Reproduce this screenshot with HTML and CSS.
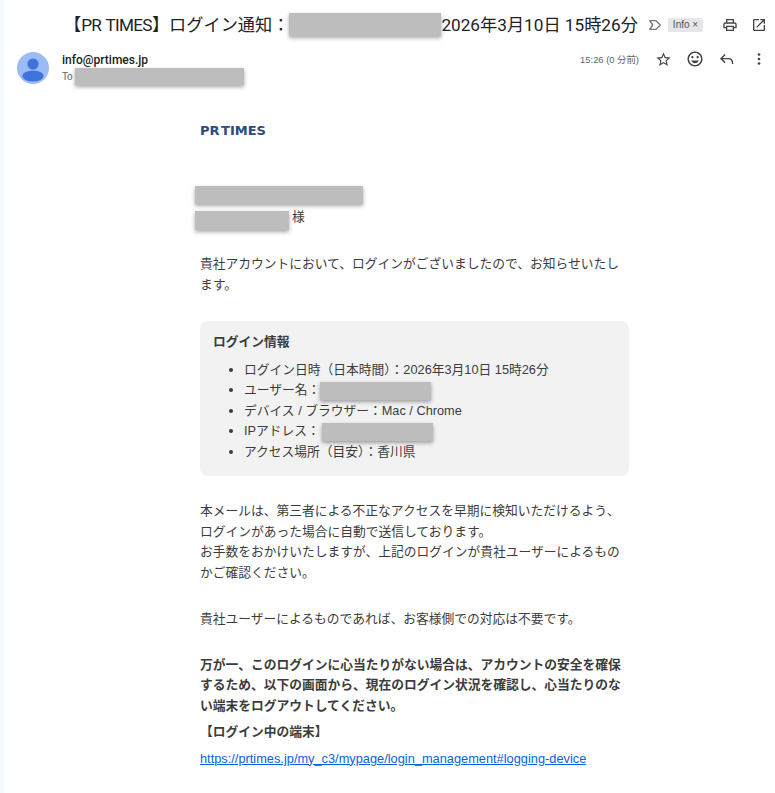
FILE: index.html
```html
<!DOCTYPE html>
<html lang="ja">

<head>
    <meta charset="UTF-8">
    <title>【PR TIMES】ログイン通知</title>
    <link rel="stylesheet" href="styles.css">
</head>

<body>
    <div class="mail">
        <div class="subject-row">
            <h1 class="subject">【<span class="subject-brand">PR TIMES</span>】ログイン通知：<span class="redact redact-subject"></span>2026年3月10日 15時26分</h1>
            <svg class="label-arrow" viewBox="0 0 24 24" width="14" height="14">
                <path d="M3 4.500h10.500l7.500 7.500-7.500 7.500H3l5-7.500z" fill="none" stroke="#777" stroke-width="2.400" stroke-linejoin="round"/>
            </svg>
            <span class="tag">Info <span class="tag-x">×</span></span>
            <div class="top-icons">
                <svg viewBox="0 0 24 24" width="16" height="16">
                    <path d="M19 8h-1V3H6v5H5c-1.660 0-3 1.340-3 3v6h4v4h12v-4h4v-6c0-1.660-1.340-3-3-3zM8 5h8v3H8V5zm8 14H8v-4h8v4zm2-4v-2H6v2H4v-4c0-.55.45-1 1-1h14c.55 0 1 .45 1 1v4h-2z" fill="#444"/>
                </svg>
                <svg viewBox="0 0 24 24" width="16" height="16">
                    <path d="M19 19H5V5h7V3H5c-1.100 0-2 .9-2 2v14c0 1.100.9 2 2 2h14c1.100 0 2-.9 2-2v-7h-2v7zM14 3v2h3.590l-9.830 9.830 1.410 1.410L19 6.410V10h2V3h-7z" fill="#444"/>
                </svg>
            </div>
        </div>

        <div class="sender-row">
            <svg class="avatar" viewBox="0 0 32 32" width="32" height="32">
                <circle cx="16" cy="16" r="16" fill="#9bbcf9"/>
                <circle cx="16" cy="12" r="5.600" fill="#3f73da"/>
                <ellipse cx="16" cy="24" rx="10.600" ry="5.600" fill="#3f73da"/>
            </svg>
            <div class="sender-info">
                <div class="sender-name">info@prtimes.jp</div>
                <div class="sender-to">To <span class="redact redact-to"></span></div>
            </div>
            <div class="sender-meta">
                <span class="sent-time">15:26 (0 分前)</span>
                <svg viewBox="0 0 24 24" width="17" height="17">
                    <path d="M22 9.240l-7.190-.62L12 2 9.190 8.630 2 9.240l5.460 4.730L5.820 21 12 17.270 18.180 21l-1.630-7.030L22 9.240zM12 15.400l-3.760 2.270 1-4.280-3.320-2.880 4.380-.38L12 6.100l1.710 4.040 4.380.38-3.320 2.880 1 4.280L12 15.400z" fill="#444"/>
                </svg>
                <svg viewBox="0 0 24 24" width="18" height="18">
                    <path d="M11.990 2C6.470 2 2 6.480 2 12s4.470 10 9.990 10C17.520 22 22 17.520 22 12S17.520 2 11.990 2zM12 20c-4.420 0-8-3.580-8-8s3.580-8 8-8 8 3.580 8 8-3.580 8-8 8zm3.500-9c.83 0 1.500-.67 1.500-1.500S16.330 8 15.500 8 14 8.670 14 9.500s.67 1.500 1.500 1.500zm-7 0c.83 0 1.500-.67 1.500-1.500S9.330 8 8.500 8 7 8.670 7 9.500 7.670 11 8.500 11zm3.500 6.500c2.330 0 4.310-1.460 5.110-3.500H6.890c.8 2.040 2.780 3.500 5.110 3.500z" fill="#444"/>
                </svg>
                <svg viewBox="0 0 24 24" width="18" height="18">
                    <path d="M9.500 6 4 11.500 9.500 17M4 11.500h10c3.500 0 5.500 2.500 5.500 7" fill="none" stroke="#444" stroke-width="1.900"/>
                </svg>
                <svg class="more-icon" viewBox="0 0 24 24" width="18" height="18">
                    <circle cx="12" cy="6" r="1.800" fill="#444"/>
                    <circle cx="12" cy="12" r="1.800" fill="#444"/>
                    <circle cx="12" cy="18" r="1.800" fill="#444"/>
                </svg>
            </div>
        </div>

        <div class="body-col">
            <div class="logo">PR TIMES</div>

            <div class="recipient">
                <span class="redact redact-company"></span>
                <div class="recipient-name"><span class="redact redact-name"></span><span class="honorific">様</span></div>
            </div>

            <p class="intro">貴社アカウントにおいて、ログインがございましたので、お知らせいたします。</p>

            <div class="info-box">
                <div class="info-title">ログイン情報</div>
                <ul class="info-list">
                    <li>ログイン日時（日本時間）：2026年3月10日 15時26分</li>
                    <li>ユーザー名：<span class="redact redact-value"></span></li>
                    <li>デバイス / ブラウザー：Mac / Chrome</li>
                    <li>IPアドレス：<span class="redact redact-value redact-ip"></span></li>
                    <li>アクセス場所（目安）：香川県</li>
                </ul>
            </div>

            <p class="notice">本メールは、第三者による不正なアクセスを早期に検知いただけるよう、ログインがあった場合に自動で送信しております。<br>お手数をおかけいたしますが、上記のログインが貴社ユーザーによるものかご確認ください。</p>

            <p class="notice notice-short">貴社ユーザーによるものであれば、お客様側での対応は不要です。</p>

            <p class="warning">万が一、このログインに心当たりがない場合は、アカウントの安全を確保するため、以下の画面から、現在のログイン状況を確認し、心当たりのない端末をログアウトしてください。</p>
            <p class="device-title">【ログイン中の端末】</p>
            <a class="device-link" href="#">https://prtimes.jp/my_c3/mypage/login_management#logging-device</a>
        </div>
    </div>
</body>

</html>
```

FILE: styles.css
```css
body {
    margin: 0;
    background-color: #fff;
    font-family: "Liberation Sans", "Noto Sans CJK JP", sans-serif;
    color: #3c3c3c;
}

.mail {
    height: 793px;
    overflow: hidden;
    border-left: 4px solid #f5f8fd;
    box-sizing: border-box;
}

.redact {
    display: inline-block;
    background-color: #bdbdbd;
    box-shadow: 0 2px 4px rgba(0, 0, 0, 0.35);
    vertical-align: middle;
}

.subject-row {
    display: flex;
    align-items: center;
    height: 50px;
    padding-left: 60px;
}

.subject {
    margin: 0;
    font-family: Roboto, "Noto Sans CJK JP", sans-serif;
    font-size: 17.2px;
    font-weight: 400;
    line-height: 24px;
    color: #222;
    white-space: nowrap;
}

.subject-brand {
    letter-spacing: -0.7px;
    word-spacing: 1px;
}

.redact-subject {
    width: 152px;
    height: 23px;
    vertical-align: -5px;
}

.label-arrow {
    margin-left: 10px;
}

.tag {
    margin-left: 6px;
    padding: 1px 5px;
    border-radius: 2px;
    background-color: #e6e6e6;
    font-size: 10px;
    line-height: 12px;
    color: #555;
    white-space: nowrap;
}

.top-icons {
    display: flex;
    gap: 13px;
    margin-left: 19px;
}

.sender-row {
    display: flex;
    align-items: flex-start;
    padding-left: 13px;
}

.avatar {
    margin-top: 2px;
}

.sender-info {
    margin-left: 13px;
    margin-top: 3px;
}

.sender-name {
    font-family: Roboto, sans-serif;
    font-size: 12px;
    font-weight: 500;
    line-height: 15px;
    color: #222;
}

.sender-to {
    display: flex;
    align-items: center;
    gap: 2px;
    font-size: 10px;
    line-height: 15px;
    color: #5f6368;
}

.redact-to {
    width: 169px;
    height: 17px;
}

.sender-meta {
    display: flex;
    align-items: center;
    gap: 14px;
    margin-left: auto;
    margin-right: 7px;
    font-size: 9.4px;
    color: #5f6368;
}

.sent-time {
    margin-right: 2px;
}

.body-col {
    width: 429px;
    margin-left: 196px;
    margin-top: 39px;
    font-size: 12.75px;
    line-height: 20.5px;
}

.logo {
    font-family: "DejaVu Sans", sans-serif;
    font-size: 13px;
    font-weight: 700;
    line-height: 14px;
    word-spacing: -3px;
    color: #2b4a7d;
}

.recipient {
    margin-top: 48px;
    margin-left: -5px;
}

.redact-company {
    display: block;
    width: 168px;
    height: 18px;
}

.recipient-name {
    display: flex;
    align-items: flex-start;
    gap: 3px;
    margin-top: 7px;
}

.redact-name {
    width: 94px;
    height: 19px;
}

.honorific {
    margin-top: -4px;
}

.intro {
    margin: 24px 0 0;
}

.info-box {
    margin-top: 26px;
    padding: 11px 13px 14px;
    border-radius: 8px;
    background-color: #f2f2f2;
}

.info-title {
    font-weight: 700;
}

.info-list {
    margin: 7px 0 0;
    padding-left: 31px;
}

.redact-value {
    width: 111px;
    height: 18px;
}

.redact-ip {
    margin-left: 2px;
}

.notice {
    margin: 25px 0 0;
}

.notice-short {
    margin-top: 26px;
}

.warning {
    margin: 25px 0 0;
    font-weight: 700;
}

.device-title {
    margin: 6px 0 0;
    font-weight: 700;
}

.device-link {
    display: block;
    margin-top: 6px;
    font-size: 12.8px;
    color: #0b62e0;
}
```
